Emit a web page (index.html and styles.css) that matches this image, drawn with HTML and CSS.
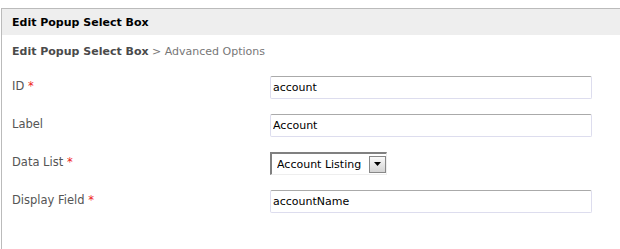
FILE: index.html
```html
<!DOCTYPE html>
<html lang="en">
<head>
    <meta charset="UTF-8">
    <title>Edit Popup Select Box</title>
    <link rel="stylesheet" href="styles.css">
</head>
<body>
    <div class="panel">
        <div class="panel-title">Edit Popup Select Box</div>
        <div class="crumbs"><strong>Edit Popup Select Box</strong> &gt; Advanced Options</div>

        <form class="form">
            <div class="row">
                <label class="label">ID <span class="req">*</span></label>
                <input class="text" type="text" value="account">
            </div>
            <div class="row">
                <label class="label">Label</label>
                <input class="text" type="text" value="Account">
            </div>
            <div class="row">
                <label class="label">Data List <span class="req">*</span></label>
                <div class="select">
                    <select>
                        <option>Account Listing</option>
                    </select>
                    <span class="select-btn">
                        <svg width="7" height="4" viewBox="0 0 7 4"><path d="M0 0h7L3.5 4z" fill="#000"/></svg>
                    </span>
                </div>
            </div>
            <div class="row">
                <label class="label">Display Field <span class="req">*</span></label>
                <input class="text" type="text" value="accountName">
            </div>
        </form>
    </div>
</body>
</html>
```

FILE: styles.css
```css
body {
    margin: 0;
    padding: 8px 0 0 1px;
    background: #fff;
    font-family: "DejaVu Sans", Verdana, sans-serif;
    font-size: 11px;
    color: #444;
}
.panel {
    border-top: 1px solid #bbb;
    border-left: 1px solid #bbb;
    height: 240px;
}
.panel-title {
    background: #eee;
    height: 26px;
    line-height: 27px;
    padding-left: 10px;
    font-weight: bold;
    color: #000;
}
.crumbs {
    padding: 7px 0 0 10px;
    line-height: 20px;
    color: #777;
}
.crumbs strong {
    color: #4a4a4a;
}
.form {
    margin-top: 14px;
}
.row {
    display: flex;
    align-items: flex-start;
    height: 38px;
}
.label {
    width: 258px;
    padding: 3px 0 0 10px;
    font-size: 11.5px;
    color: #555;
}
.req {
    color: #e22;
}
.text {
    box-sizing: border-box;
    width: 322px;
    height: 23px;
    margin: 0;
    padding: 0 2px;
    border: 1px solid #dde;
    border-top-color: #aaa;
    border-radius: 2px;
    font-family: "DejaVu Sans", Verdana, sans-serif;
    font-size: 11px;
    color: #000;
    outline: none;
}
.select {
    box-sizing: border-box;
    display: inline-flex;
    align-items: center;
    width: 117px;
    height: 23px;
    border: 1px solid #eee;
    border-top: 2px solid #808080;
    border-left: 2px solid #808080;
}
.select select {
    appearance: none;
    -webkit-appearance: none;
    border: 0;
    padding: 0 0 0 5px;
    margin: 0;
    width: 97px;
    background: #fff;
    font-family: "DejaVu Sans", Verdana, sans-serif;
    font-size: 11px;
    color: #000;
    outline: none;
}
.select-btn {
    box-sizing: border-box;
    display: flex;
    align-items: center;
    justify-content: center;
    width: 17px;
    height: 17px;
    border: 1px solid #888;
    background: linear-gradient(#fafafa, #d4d4d4);
}
```
